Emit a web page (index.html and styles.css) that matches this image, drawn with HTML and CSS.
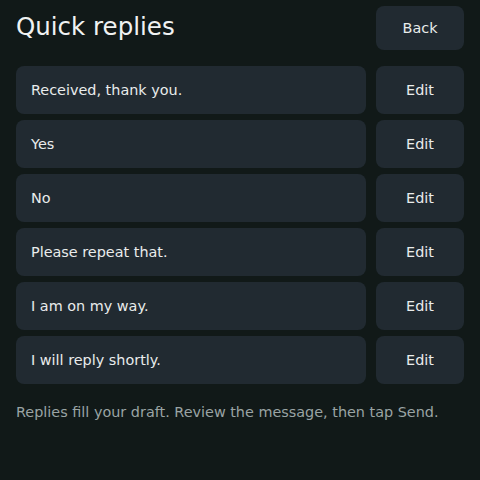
FILE: index.html
```html
<!DOCTYPE html>
<html lang="en">
<head>
    <meta charset="UTF-8">
    <meta name="viewport" content="width=device-width, initial-scale=1.0">
    <title>Quick replies</title>
    <link rel="stylesheet" href="styles.css">
</head>
<body>

    <!-- header -->
    <div class="header">
        <h1>Quick replies</h1>
        <button class="btn">Back</button>
    </div>

    <!-- reply list -->
    <div class="list">
        <div class="row"><div class="reply">Received, thank you.</div><button class="btn">Edit</button></div>
        <div class="row"><div class="reply">Yes</div><button class="btn">Edit</button></div>
        <div class="row"><div class="reply">No</div><button class="btn">Edit</button></div>
        <div class="row"><div class="reply">Please repeat that.</div><button class="btn">Edit</button></div>
        <div class="row"><div class="reply">I am on my way.</div><button class="btn">Edit</button></div>
        <div class="row"><div class="reply">I will reply shortly.</div><button class="btn">Edit</button></div>
    </div>

    <p class="note">Replies fill your draft. Review the message, then tap Send.</p>

</body>
</html>
```

FILE: styles.css
```css
body { margin: 0; padding: 6px 16px; background-color: #111918; color: #e9ecec; font-family: "DejaVu Sans", sans-serif; }

/* header */
.header { display: flex; justify-content: space-between; align-items: center; height: 44px; }
h1 { margin: -4px 0 0; font-size: 24.5px; font-weight: 500; color: #f0f2f2; }

.btn { width: 88px; height: 44px; border: none; border-radius: 8px; background-color: #212a31; color: #e9ecec;
       font-family: inherit; font-size: 14.4px; cursor: pointer; }

/* list */
.list { display: flex; flex-direction: column; gap: 6px; margin-top: 16px; }
.row { display: flex; gap: 10px; height: 48px; }
.row .btn { height: 48px; }
.reply { flex: 1; display: flex; align-items: center; padding-left: 15px; background-color: #212a31; border-radius: 8px; font-size: 14.4px; }

/* footer */
.note { margin: 20px 0 0; font-size: 14.4px; color: #9aa4a4; }
```
